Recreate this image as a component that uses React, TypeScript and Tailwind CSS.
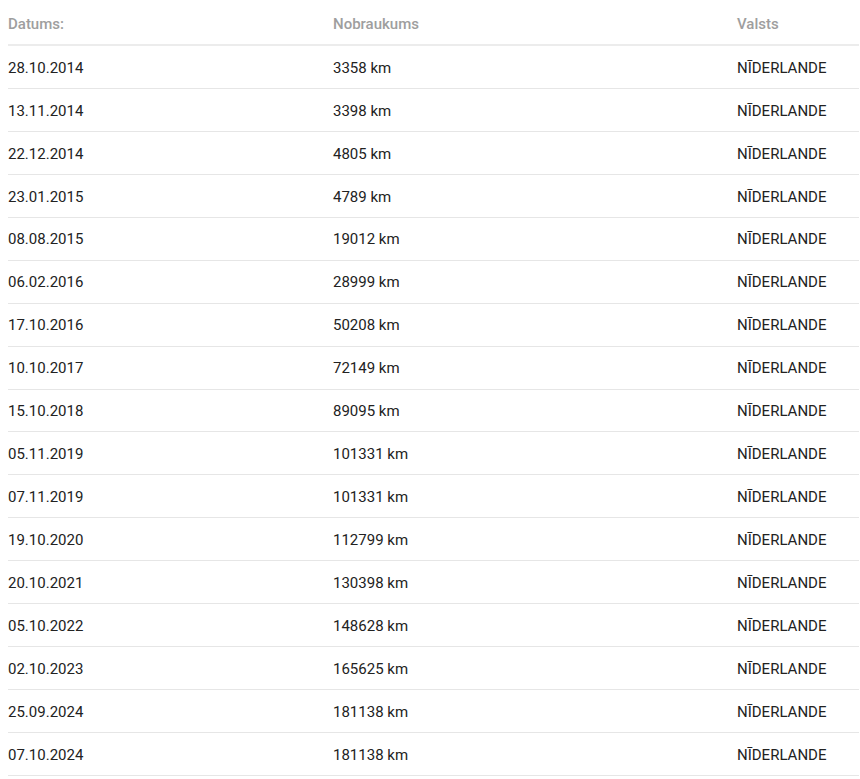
const rows = [
  ["28.10.2014", "3358 km"],
  ["13.11.2014", "3398 km"],
  ["22.12.2014", "4805 km"],
  ["23.01.2015", "4789 km"],
  ["08.08.2015", "19012 km"],
  ["06.02.2016", "28999 km"],
  ["17.10.2016", "50208 km"],
  ["10.10.2017", "72149 km"],
  ["15.10.2018", "89095 km"],
  ["05.11.2019", "101331 km"],
  ["07.11.2019", "101331 km"],
  ["19.10.2020", "112799 km"],
  ["20.10.2021", "130398 km"],
  ["05.10.2022", "148628 km"],
  ["02.10.2023", "165625 km"],
  ["25.09.2024", "181138 km"],
  ["07.10.2024", "181138 km"],
];

export default function App() {
  return (
    <div className="min-h-screen bg-white pl-2 pr-[1px] font-['Roboto',sans-serif] text-[15px]">
      {/* Header */}
      <div className="grid grid-cols-[325px_404px_1fr] items-center h-[46px] pt-[5px] border-b-2 border-[#ececec] font-medium text-[#9e9e9e]">
        <span>Datums:</span>
        <span>Nobraukums</span>
        <span>Valsts</span>
      </div>

      {/* Rows */}
      {rows.map(([date, km]) => (
        <div
          key={date + km}
          className="grid grid-cols-[325px_404px_1fr] items-center h-[42.94px] pt-[2px] border-b border-[#e6e6e6] text-[#222222]"
        >
          <span>{date}</span>
          <span>{km}</span>
          <span>NĪDERLANDE</span>
        </div>
      ))}
    </div>
  );
}
